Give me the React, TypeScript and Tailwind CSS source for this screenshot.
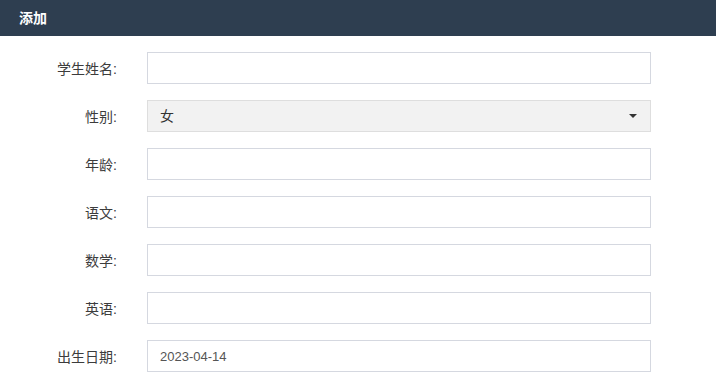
import React from 'react';

const fields: { label: string; value?: string; kind?: 'select' }[] = [
  { label: '学生姓名:' },
  { label: '性别:', value: '女', kind: 'select' },
  { label: '年龄:' },
  { label: '语文:' },
  { label: '数学:' },
  { label: '英语:' },
  { label: '出生日期:', value: '2023-04-14' },
];

export default function App() {
  return (
    <div className="w-[716px] h-[380px] overflow-hidden bg-white" style={{ fontFamily: '"Liberation Sans", "Noto Sans CJK SC", sans-serif' }}>
      <div className="h-[36px] bg-[#2e3e50] flex items-center px-[19px]">
        <span className="text-white text-[14px] font-bold">添加</span>
      </div>
      <div className="pt-[16px] flex flex-col gap-[16px]">
        {fields.map((f) => (
          <div key={f.label} className="flex items-center h-[32px]">
            <label className="w-[117px] text-right text-[14px] text-[#3c3c3c] pt-[3px]">{f.label}</label>
            {f.kind === 'select' ? (
              <div className="ml-[30px] w-[504px] h-[32px] border border-[#dedede] bg-[#f2f2f2] flex items-center justify-between pl-[12px] pr-[13px] text-[14px] text-[#333]">
                <span>{f.value}</span>
                <span className="w-0 h-0 border-l-[4px] border-r-[4px] border-t-[4px] border-l-transparent border-r-transparent border-t-[#333]" />
              </div>
            ) : (
              <input
                readOnly
                value={f.value ?? ''}
                className="ml-[30px] w-[504px] h-[32px] border border-[#d5d8e0] bg-white px-[12px] text-[13px] text-[#555] outline-none"
              />
            )}
          </div>
        ))}
      </div>
    </div>
  );
}
